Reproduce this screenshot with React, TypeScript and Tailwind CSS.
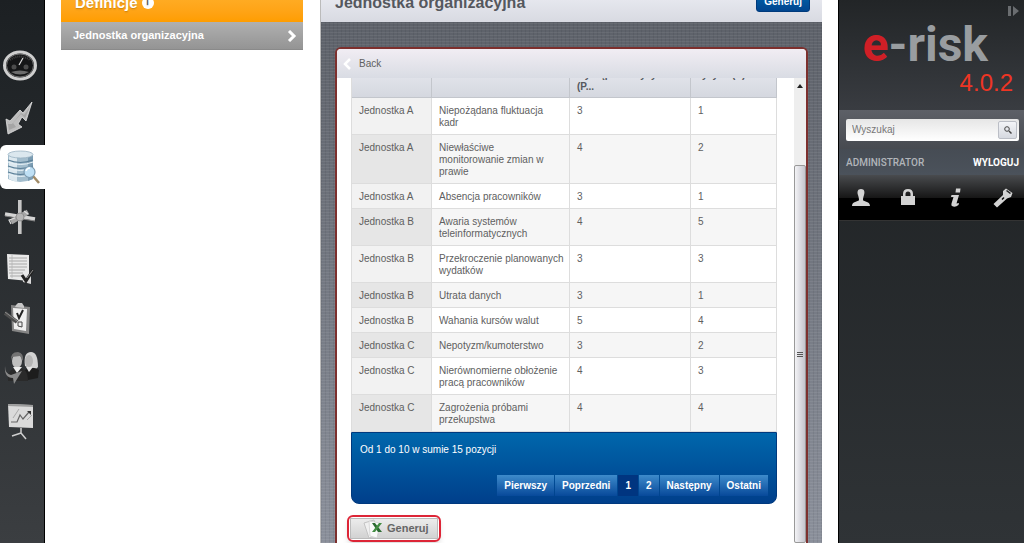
import { useState } from "react";
import type { ReactNode } from "react";

const rows = [
  { unit: "Jednostka A", risk: "Niepożądana fluktuacja\nkadr", p: 3, s: 1 },
  { unit: "Jednostka A", risk: "Niewłaściwe\nmonitorowanie zmian w\nprawie", p: 4, s: 2 },
  { unit: "Jednostka A", risk: "Absencja pracowników", p: 3, s: 1 },
  { unit: "Jednostka B", risk: "Awaria systemów\nteleinformatycznych", p: 4, s: 5 },
  { unit: "Jednostka B", risk: "Przekroczenie planowanych\nwydatków", p: 3, s: 3 },
  { unit: "Jednostka B", risk: "Utrata danych", p: 3, s: 1 },
  { unit: "Jednostka B", risk: "Wahania kursów walut", p: 5, s: 4 },
  { unit: "Jednostka C", risk: "Nepotyzm/kumoterstwo", p: 3, s: 2 },
  { unit: "Jednostka C", risk: "Nierównomierne obłożenie\npracą pracowników", p: 4, s: 3 },
  { unit: "Jednostka C", risk: "Zagrożenia próbami\nprzekupstwa", p: 4, s: 4 },
];

const pages = ["Pierwszy", "Poprzedni", "1", "2", "Następny", "Ostatni"];

const navItems: { label: string; icon: ReactNode }[] = [
  {
    label: "Pulpit",
    icon: (
      <>
        <ellipse cx="20" cy="19.500" rx="15.500" ry="13.500" fill="#151617" stroke="#cfcfcf" strokeWidth="3" />
        <ellipse cx="20" cy="19.500" rx="13.500" ry="11.500" fill="none" stroke="#8b8b8b" strokeWidth="0.800" />
        <path d="M10 14 Q20 7 30 14" fill="none" stroke="#444" strokeWidth="2" strokeDasharray="1 1" />
        <circle cx="14" cy="21" r="2.500" fill="#4c4c4c" />
        <circle cx="26" cy="21" r="2.500" fill="#4c4c4c" />
        <path d="M11 26 Q20 23 29 26 Q20 31 11 26" fill="#6c6c6c" />
        <path d="M19 19 L23 12" stroke="#ddd" strokeWidth="1.200" />
      </>
    ),
  },
  {
    label: "Zdarzenia",
    icon: (
      <>
        <path d="M32 5 L26 24 L22 20 L18 27 L22 30 L8 37 L6 22 L10 24 L20 13 L23 16 Z" fill="#bcbcbc" stroke="#e2e2e2" strokeWidth="0.800" />
        <path d="M30 10 L25 21 L21 17 L13 26 L16 30 L9 33 L8 27 L12 27 L21 16 L24 18 Z" fill="#a5a5a5" />
      </>
    ),
  },
  {
    label: "Definicje",
    icon: (
      <>
        <path d="M8 7 V31 Q20 37 33 31 V7 Z" fill="#a3bdcd" />
        <path d="M9 7 V31 Q13 33 17 34 V7 Z" fill="#dce8ef" />
        <path d="M28 7 V33 L33 31 V7 Z" fill="#7c9db3" />
        <path d="M8 12 Q20 17 33 12 M8 18 Q20 23 33 18 M8 24 Q20 29 33 24" fill="none" stroke="#5d8199" strokeWidth="1.200" />
        <path d="M8 14 Q20 19 33 14 M8 20 Q20 25 33 20 M8 26 Q20 31 33 26" fill="none" stroke="#e8f2f7" strokeWidth="1" />
        <ellipse cx="20.500" cy="6.500" rx="12.500" ry="3.500" fill="#dbe7ee" stroke="#9ab3c3" strokeWidth="0.800" />
        <path d="M33 28 L39 35" stroke="#a08a66" strokeWidth="2.500" />
        <circle cx="29.500" cy="24" r="5.500" fill="#bfe0f5" stroke="#7d9bb0" strokeWidth="1.200" />
        <path d="M26 23 Q27 20 30 20" fill="none" stroke="#fff" strokeWidth="1.500" />
      </>
    ),
  },
  {
    label: "Procesy",
    icon: (
      <>
        <path d="M20 1 V35" stroke="#c6c6c6" strokeWidth="4" />
        <path d="M21.500 1 V35" stroke="#8c8c8c" strokeWidth="1" />
        <path d="M5 15 L35 20" stroke="#d4d4d4" strokeWidth="3.500" />
        <path d="M5 17 L35 22" stroke="#858585" strokeWidth="1" />
        <path d="M11 23 L28 13" stroke="#a5a5a5" strokeWidth="5" />
        <path d="M11 25 L9 21 L15 19 M24 12 L28 15" fill="none" stroke="#ddd" strokeWidth="1.200" />
        <circle cx="20" cy="18" r="4" fill="#b5b5b5" stroke="#888" strokeWidth="0.800" />
      </>
    ),
  },
  {
    label: "Rejestr",
    icon: (
      <>
        <path d="M7 4 L29 5 L29 31 L8 29 Z" fill="#e9e9e9" />
        <path d="M9 8 H27 M9 11 H27 M9 14 H27 M9 17 H27 M9 20 H25 M9 23 H23 M10 26 H22" stroke="#a9a9a9" strokeWidth="1" />
        <path d="M12 5 V28" stroke="#b5b5b5" strokeWidth="0.800" />
        <path d="M22 25 L31 26 L31 34 L23 32 Z" fill="#d9d9d9" />
        <path d="M22 25 L26 31 L33 20" fill="none" stroke="#222" strokeWidth="3" />
        <path d="M27 28 L33 20" stroke="#8c8c8c" strokeWidth="1" />
      </>
    ),
  },
  {
    label: "Ankiety",
    icon: (
      <>
        <path d="M11 4 L30 6 L29 33 L12 30 Z" fill="#858585" />
        <path d="M13 7 L27 8 L26 30 L14 28 Z" fill="#efefef" />
        <path d="M16 4 L18 2 L22 2 L24 5 L24 7 L15 6 Z" fill="#c8c8c8" />
        <path d="M17 12 L19 17 L23 9" fill="none" stroke="#222" strokeWidth="2" />
        <path d="M18 21 L22 21 L22 26 L18 25 Z" fill="none" stroke="#444" strokeWidth="1" />
        <path d="M5 12 L17 21" stroke="#4e4e4e" strokeWidth="4" />
        <path d="M5 11 L17 20" stroke="#8b8b8b" strokeWidth="1" />
      </>
    ),
  },
  {
    label: "Użytkownicy",
    icon: (
      <>
        <path d="M25 14 Q23 0 31 0 Q38 0 38 15 L34 19 Z" fill="#d2d2d2" />
        <ellipse cx="29" cy="9" rx="4" ry="6" fill="#b5b5b5" />
        <path d="M23 19 Q32 13 39 18 L38 26 L23 29 Z" fill="#1d1d1d" />
        <path d="M26 15 L29 20 L33 15" fill="#e4e4e4" />
        <ellipse cx="17" cy="9" rx="5" ry="7" fill="#bfbfbf" />
        <path d="M11 9 Q10 0 18 0 Q24 1 23 9 L20 4 L12 5 Z" fill="#727272" />
        <path d="M8 29 Q7 17 17 16 Q28 15 28 29 Z" fill="#2a2a2a" />
        <path d="M13 15 L17 21 L22 15" fill="#ededed" />
        <path d="M5 14 Q5 22 11 23 L22 19 L14 32 L13 26 Q4 26 5 14 Z" fill="#8a8a8a" />
      </>
    ),
  },
  {
    label: "Raporty",
    icon: (
      <>
        <path d="M8 1 L33 2 L33 25 L9 24 Z" fill="#dadada" />
        <path d="M8 1 L33 2 L33 4 L8 3 Z" fill="#9c9c9c" />
        <path d="M11 19 L17 19 L20 12 L23 16 L29 9" fill="none" stroke="#666" strokeWidth="1.200" />
        <path d="M27 8 H31 V12 Z" fill="#333" />
        <path d="M13 15 L19 6 M27 17 L32 12" stroke="#aaa" strokeWidth="1" />
        <path d="M21 25 V30 M21 30 L12 33 M21 30 L26 36" stroke="#cfcfcf" strokeWidth="1.500" />
      </>
    ),
  },
];

const tools: { label: string; icon: ReactNode }[] = [
  {
    label: "Profil",
    icon: <path d="M10 1 C6.500 1 6 4 7 7 C7.500 9 8 10 8 12 C7 14 1 13 1 18 H19 C19 13 13 14 12 12 C12 10 12.500 9 13 7 C14 4 13.500 1 10 1 Z" />,
  },
  {
    label: "Hasło",
    icon: <path fillRule="evenodd" d="M3 8 H5 V6 Q5 1 10 1 Q15 1 15 6 V8 H17 V17 H3 Z M7.500 8 H12.500 V6 Q12.500 3.500 10 3.500 Q7.500 3.500 7.500 6 Z" />,
  },
  {
    label: "Informacje",
    icon: <path d="M10 0.500 H14.500 L14 4.500 H9.500 Z M5.500 7 H13 L10.500 15.500 L13 15 L12.500 17 Q9 20 6 18 Q5 17.500 5.500 15.500 L7.500 9 H5 Z" />,
  },
  {
    label: "Narzędzia",
    icon: <path fillRule="evenodd" d="M10 3 L13 0.500 L19.500 5 L18 9 L14 10.500 L4 19.500 L0.500 16 L10 7 Z M13 3 L17 6 L18 5 L14 2 Z M8.500 11 L10.500 9 L11.500 10 L9.500 12 Z" />,
  },
];

function ExcelIcon() {
  return (
    <svg viewBox="0 0 20 20" className="size-5" aria-hidden="true">
      <path d="M1 4 L11 1 L15 16 L6 19 Z" fill="#f0f0f0" stroke="#c4c4c4" />
      <path d="M6 2 L17 4 L14 19 L7 17 Z" fill="#fafafa" stroke="#cfcfcf" strokeWidth="0.700" />
      <path d="M9 4 H12 L19 13 H15 Z" fill="#2d6b32" />
      <path d="M16 4 H19 L12 13 H9 Z" fill="#438d43" />
    </svg>
  );
}

export default function App() {
  const [page, setPage] = useState("1");
  const [query, setQuery] = useState("");

  return (
    <div className="flex h-screen overflow-hidden bg-white font-['Liberation_Sans',Arial,sans-serif] text-[10px] text-[#606060]">
      {/* Module icons */}
      <nav className="flex w-[45px] shrink-0 flex-col gap-[7px] border-r border-black bg-linear-to-b from-[#1c2023] to-[#3b3e41] pt-[43px]">
        {navItems.map(item => (
          <a
            key={item.label}
            href="#"
            aria-label={item.label}
            className={
              item.label === "Definicje"
                ? "-mr-px flex h-11 items-center rounded-l-md bg-white"
                : "flex h-11 items-center"
            }
          >
            <svg viewBox="0 0 40 38" className="h-[38px] w-10">
              {item.icon}
            </svg>
          </a>
        ))}
      </nav>

      {/* Section menu */}
      <aside className="-mt-5 ml-4 w-[242px] shrink-0">
        <h2 className="flex h-[42px] items-center gap-1 bg-linear-to-b from-[#ffb733] to-[#ff9d00] px-[14px] pt-1 text-[15px] font-bold text-white text-shadow-sm">
          Definicje
          <span className="flex size-3 items-center justify-center rounded-full bg-white text-[9px] text-[#555]">
            i
          </span>
        </h2>
        <a
          href="#"
          className="flex h-[28px] items-center justify-between border-b border-[#8a8a8a] bg-linear-to-b from-[#b0b0b0] to-[#949494] pr-[6px] pl-3 text-[11px] font-bold text-white"
        >
          Jednostka organizacyjna
          <svg viewBox="0 0 10 12" className="h-3 w-[10px]" aria-hidden="true">
            <path d="M2 1 L7 6 L2 11" fill="none" stroke="#fff" strokeWidth="3" />
          </svg>
        </a>
      </aside>

      {/* Report */}
      <main className="-mt-5 mr-4 ml-[17px] flex min-w-0 flex-1 flex-col border-l border-[#bbb] bg-linear-to-b from-[#5a5e66] to-[#8b909b]">
        <header className="flex h-[42px] shrink-0 items-center justify-between bg-linear-to-b from-[#f2f3f8] to-[#d8dae2] pr-3 pl-[14px]">
          <h1 className="pt-1 text-[16px] font-bold text-[#55585e]">Jednostka organizacyjna</h1>
          <button className="h-[22px] rounded-[3px] border border-[#003a7c] bg-linear-to-b from-[#0068ae] to-[#00458f] px-[7px] font-bold text-white">
            Generuj
          </button>
        </header>

        <div className="flex min-h-0 flex-1 flex-col bg-[repeating-linear-gradient(0deg,#ffffff10_0_1px,transparent_1px_3px),repeating-linear-gradient(90deg,#00000010_0_1px,transparent_1px_4px)] px-[14px] pt-[25px]">
          <section className="flex min-h-0 flex-1 flex-col overflow-hidden rounded-t-md border-x-2 border-t-2 border-[#7d302e] bg-white">
            <a
              href="#"
              className="flex h-[29px] shrink-0 items-center gap-2 bg-linear-to-b from-[#f1edf3] to-[#d9dce4] pl-[6px]"
            >
              <svg viewBox="0 0 8 12" className="h-3 w-2" aria-hidden="true">
                <path d="M7 1 L2 6 L7 11" fill="none" stroke="#fff" strokeWidth="2.500" />
              </svg>
              Back
            </a>

            <div className="flex min-h-0 flex-1">
              <div className="min-w-0 flex-1 overflow-hidden pr-[17px] pl-[14px]">
                <table className="-mt-[21px] w-full table-fixed border-separate border-spacing-0 border-l border-[#ddd] text-left leading-[12px]">
                  <thead>
                    <tr className="bg-linear-to-b from-[#eceef3] to-[#d4d7df] align-top text-[#55585e] *:border-r *:border-b *:border-[#c3c6cc] *:px-[7px] *:pb-1">
                      <th className="w-[80px]" aria-label="Jednostka" />
                      <th className="w-[138px]" aria-label="Ryzyko" />
                      <th className="w-[121px]">
                        Prawdop.
                        <br />
                        wystąpienia ryzyka
                        <br />
                        (P...
                      </th>
                      <th>
                        Skutki
                        <br />
                        ryzyka (S)
                      </th>
                    </tr>
                  </thead>
                  <tbody>
                    {rows.map(row => (
                      <tr
                        key={row.risk}
                        className="align-top odd:bg-white even:bg-[#f6f6f6] *:border-r *:border-b *:border-[#ddd] *:px-[7px] *:pt-[7px] *:pb-[5px] odd:*:first:bg-[#f2f2f2] even:*:first:bg-[#e6e6e6]"
                      >
                        <td>{row.unit}</td>
                        <td className="whitespace-pre">{row.risk}</td>
                        <td>{row.p}</td>
                        <td>{row.s}</td>
                      </tr>
                    ))}
                  </tbody>
                </table>

                <div className="flex h-[72px] flex-col justify-between rounded-b-lg border border-[#00397e] bg-linear-to-b from-[#0067ac] to-[#003f8b] px-2 pt-[9px] pb-[7px] text-white">
                  <p>Od 1 do 10 w sumie 15 pozycji</p>
                  <div className="flex justify-end gap-px">
                    {pages.map(label => (
                      <button
                        key={label}
                        onClick={() => setPage(label)}
                        className={
                          label === page
                            ? "h-[21px] bg-[#003580] px-[7px] font-bold"
                            : "h-[21px] bg-linear-to-b from-[#3d8bcb] to-[#07499a] px-[7px] font-bold"
                        }
                      >
                        {label}
                      </button>
                    ))}
                  </div>
                </div>

                <div className="mt-[11px] -ml-1 w-fit rounded-md border-2 border-[#dd2537] p-px shadow-md">
                  <button className="flex h-[21px] items-center gap-1 border border-[#bbb] bg-linear-to-b from-[#ececec] to-[#d2d2d2] pr-2 pl-3 text-[11px] font-bold text-[#666]">
                    <ExcelIcon />
                    Generuj
                  </button>
                </div>
              </div>

              {/* Scroll track */}
              <div className="flex w-3 shrink-0 flex-col bg-[#eee]" aria-hidden="true">
                <div className="flex h-[87px] justify-center pt-[6px]">
                  <svg viewBox="0 0 6 4" className="h-1 w-[6px]">
                    <path d="M0 4 L3 0 L6 4 Z" fill="#222" />
                  </svg>
                </div>
                <div className="flex flex-1 flex-col items-center justify-center gap-px rounded-xs border border-[#999] bg-linear-to-r from-[#f3f3f6] to-[#c5c5cd]">
                  <span className="h-px w-[6px] bg-[#555]" />
                  <span className="h-px w-[6px] bg-[#555]" />
                  <span className="h-px w-[6px] bg-[#555]" />
                </div>
              </div>
            </div>
          </section>
        </div>
      </main>

      {/* Account panel */}
      <aside className="flex w-[186px] shrink-0 flex-col border-l border-black bg-linear-to-b from-[#1c1f21] to-[#2f3336]">
        <div className="relative h-[110px] bg-linear-to-b from-[#222527] to-[#393c41] text-right">
          <button aria-label="Zwiń panel" className="absolute top-[5px] right-[5px]">
            <svg viewBox="0 0 12 12" className="size-3">
              <path d="M1 1 H4 V11 H1 Z M6 1 L12 6 L6 11 Z" fill="#6a6d70" />
            </svg>
          </button>
          <div className="pt-[15px] pr-9 font-[Roboto,sans-serif] text-[48px] leading-[60px] font-bold whitespace-nowrap text-[#999da0]">
            <span className="text-[#d01f26]">e</span>-risk
          </div>
          <div className="-mt-[6px] pr-[11px] text-[24px] leading-[28px] text-[#ee3524]">4.0.2</div>
        </div>

        <form
          className="flex h-[39px] items-center bg-linear-to-b from-[#5d6067] to-[#474a50] pr-[5px] pl-[7px]"
          onSubmit={e => e.preventDefault()}
        >
          <div className="flex h-[22px] w-full items-center rounded-xs bg-linear-to-b from-[#e6e6e6] to-white pr-[2px]">
            <input
              aria-label="Wyszukaj"
              placeholder="Wyszukaj"
              value={query}
              onChange={e => setQuery(e.target.value)}
              className="h-full min-w-0 flex-1 px-[6px] outline-none placeholder:text-[#777]"
            />
            <button
              aria-label="Szukaj"
              className="flex h-[18px] w-[19px] items-center justify-center rounded-xs border border-[#bbbec6] bg-linear-to-b from-[#f3f4f7] to-[#d6d9e0]"
            >
              <svg viewBox="0 0 8 8" className="size-2">
                <circle cx="3" cy="3" r="2.300" fill="none" stroke="#444" />
                <path d="M5 5 L7.500 7.500" stroke="#444" strokeWidth="1.500" />
              </svg>
            </button>
          </div>
        </form>

        <div className="flex h-[26px] items-center justify-between bg-linear-to-b from-[#464c54] to-[#4b525b] pr-[5px] pl-[7px] font-[Roboto,sans-serif]">
          <span className="font-medium text-[#b1b5ba]">ADMINISTRATOR</span>
          <a href="#" className="font-bold text-white">
            WYLOGUJ
          </a>
        </div>

        <div className="flex h-[46px] items-center justify-between border-b border-[#333] bg-[linear-gradient(#494b4e,#171717_50%,#000_50%)] pr-[11px] pl-3">
          {tools.map(tool => (
            <button key={tool.label} aria-label={tool.label}>
              <svg viewBox="0 0 20 20" className="size-5" fill="#d3d3d3">
                {tool.icon}
              </svg>
            </button>
          ))}
        </div>
      </aside>
    </div>
  );
}
